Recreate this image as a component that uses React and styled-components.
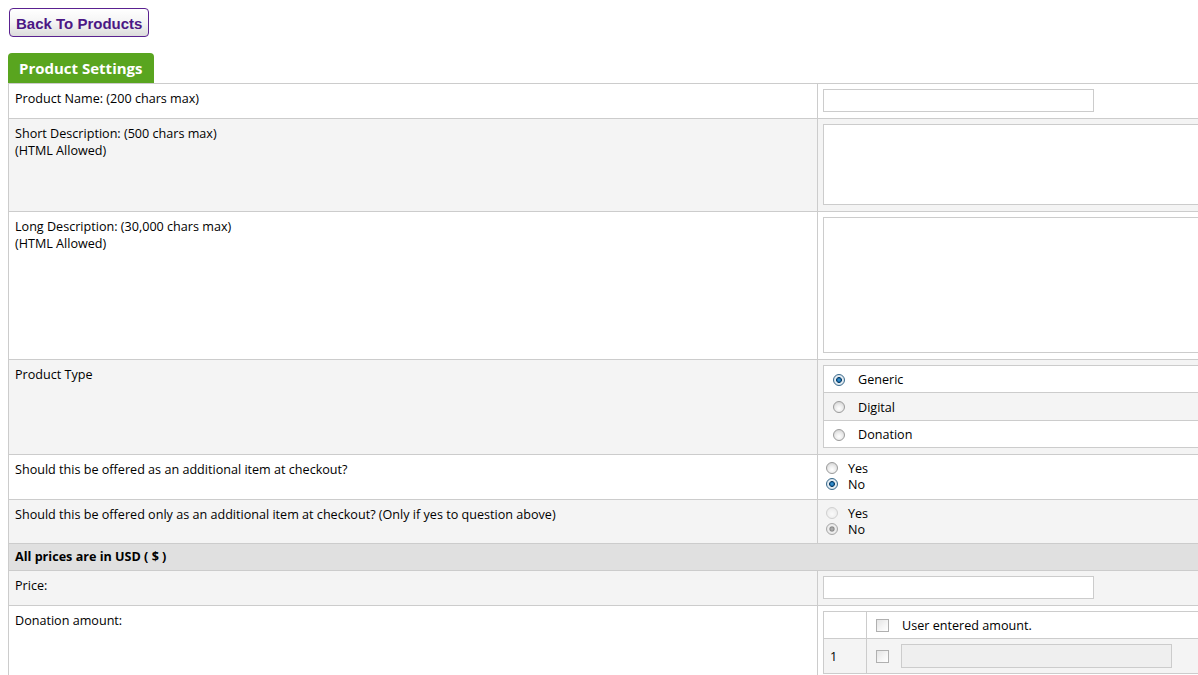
import React from "react";
import styled, { createGlobalStyle, css } from "styled-components";

const GlobalStyle = createGlobalStyle`
  html, body {
    margin: 0;
    padding: 0;
    background: #fff;
    overflow: hidden;
  }
  body {
    font-family: "Open Sans", "Liberation Sans", Arial, sans-serif;
    font-size: 12.6px;
    color: #000;
  }
`;

const productTypes = [
  { label: "Generic", checked: true },
  { label: "Digital", checked: false },
  { label: "Donation", checked: false },
];

const App = () => {
  return (
    <Page>
      <GlobalStyle />
      <BackButton type="button">Back To Products</BackButton>
      <Tab>Product Settings</Tab>
      <Settings>
        <tbody>
          <Row>
            <Label>Product Name: (200 chars max)</Label>
            <Field>
              <TextInput type="text" />
            </Field>
          </Row>
          <Row $alt>
            <Label>
              Short Description: (500 chars max)
              <br />
              (HTML Allowed)
            </Label>
            <Field>
              <TextArea $height={81} />
            </Field>
          </Row>
          <Row>
            <Label>
              Long Description: (30,000 chars max)
              <br />
              (HTML Allowed)
            </Label>
            <Field>
              <TextArea $height={136} />
            </Field>
          </Row>
          <Row $alt>
            <Label>Product Type</Label>
            <Field>
              <Inner>
                <tbody>
                  {productTypes.map((type, index) => (
                    <InnerRow key={type.label} $alt={index % 2 === 1}>
                      <TypeCell>
                        <Radio $checked={type.checked} />
                        <TypeText>{type.label}</TypeText>
                      </TypeCell>
                    </InnerRow>
                  ))}
                </tbody>
              </Inner>
            </Field>
          </Row>
          <Row>
            <Label>Should this be offered as an additional item at checkout?</Label>
            <Field $bottom={7}>
              <Choice>
                <Radio />
                <ChoiceText>Yes</ChoiceText>
              </Choice>
              <Choice>
                <Radio $checked />
                <ChoiceText>No</ChoiceText>
              </Choice>
            </Field>
          </Row>
          <Row $alt>
            <Label>
              Should this be offered only as an additional item at checkout? (Only if yes to
              question above)
            </Label>
            <Field>
              <Choice>
                <Radio $disabled />
                <ChoiceText>Yes</ChoiceText>
              </Choice>
              <Choice>
                <Radio $checked $disabled />
                <ChoiceText>No</ChoiceText>
              </Choice>
            </Field>
          </Row>
          <HeadRow>
            <HeadCell colSpan={2}>All prices are in USD ( $ )</HeadCell>
          </HeadRow>
          <Row $alt>
            <Label>Price:</Label>
            <Field>
              <TextInput type="text" />
            </Field>
          </Row>
          <Row>
            <Label>Donation amount:</Label>
            <Field>
              <Inner>
                <tbody>
                  <InnerRow>
                    <NumCell></NumCell>
                    <AmountCell>
                      <Checkbox />
                      <TypeText>User entered amount.</TypeText>
                    </AmountCell>
                  </InnerRow>
                  <InnerRow $alt>
                    <NumCell>1</NumCell>
                    <AmountCell $tall>
                      <Checkbox />
                      <AmountInput type="text" disabled />
                    </AmountCell>
                  </InnerRow>
                </tbody>
              </Inner>
            </Field>
          </Row>
        </tbody>
      </Settings>
    </Page>
  );
};

const Page = styled.div`
  padding: 8px;
  width: 1640px;
`;

const BackButton = styled.button`
  display: block;
  height: 29px;
  margin: 0 0 16px 1px;
  padding: 2px 6px 0;
  font-family: "Liberation Sans", Arial, sans-serif;
  font-size: 15px;
  font-weight: bold;
  color: #4b1785;
  border: 1px solid #5a2190;
  border-radius: 4px;
  background: linear-gradient(#ffffff 0%, #f4f4f4 50%, #dcdcdc 100%);
`;

const Tab = styled.div`
  display: inline-block;
  height: 30px;
  line-height: 31px;
  padding: 0 11px 0 11px;
  background: #59a51f;
  color: #fff;
  font-family: "Open Sans", "Liberation Sans", Arial, sans-serif;
  font-size: 15px;
  font-weight: bold;
  border-radius: 4px 4px 0 0;
  vertical-align: bottom;
`;

const Settings = styled.table`
  width: 1618px;
  border-collapse: collapse;
  border: 1px solid #cccccc;
`;

const Row = styled.tr`
  background: ${(p) => (p.$alt ? "#f4f4f4" : "#ffffff")};
  border-top: 1px solid #cccccc;
`;

const Label = styled.td`
  width: 796px;
  padding: 6px 6px;
  vertical-align: top;
  line-height: 17px;
  border-right: 1px solid #cccccc;
`;

const Field = styled.td`
  padding: 5px 5px ${(p) => p.$bottom ?? 6}px;
  vertical-align: top;
`;

const TextInput = styled.input`
  display: block;
  box-sizing: border-box;
  width: 271px;
  height: 23px;
  margin: 0;
  border: 1px solid #cccccc;
  background: #fff;
`;

const TextArea = styled.textarea`
  display: block;
  box-sizing: border-box;
  width: 790px;
  height: ${(p) => p.$height}px;
  margin: 0;
  border: 1px solid #cccccc;
  background: #fff;
  resize: none;
`;

const Inner = styled.table`
  width: 100%;
  border-collapse: collapse;
  border: 1px solid #cccccc;
`;

const InnerRow = styled.tr`
  background: ${(p) => (p.$alt ? "#f4f4f4" : "#ffffff")};
  border-top: 1px solid #cccccc;
`;

const TypeCell = styled.td`
  height: 26.4px;
  padding: 0 9px;
  vertical-align: middle;
  white-space: nowrap;
`;

const TypeText = styled.span`
  margin-left: 13px;
  vertical-align: middle;
`;

const Choice = styled.div`
  display: flex;
  align-items: center;
  height: 16px;
  padding-left: 3px;
`;

const ChoiceText = styled.span`
  margin-left: 10px;
`;

const Radio = styled.span`
  display: inline-block;
  box-sizing: border-box;
  width: 12px;
  height: 12px;
  border-radius: 50%;
  vertical-align: middle;
  border: 1px solid #9c9c9c;
  background: radial-gradient(circle at 50% 65%, #ffffff 0%, #ececec 45%, #c9c9c9 100%);
  ${(p) =>
    p.$checked &&
    css`
      border-color: #3a6a8c;
      background: radial-gradient(
        circle at 50% 50%,
        #4aa3dc 0%,
        #1b6fae 22%,
        #0d3f66 36%,
        #e6eef4 46%,
        #d0dbe3 100%
      );
    `}
  ${(p) =>
    p.$disabled &&
    css`
      border-color: #d0d0d0;
      background: radial-gradient(circle at 50% 60%, #fafafa 0%, #eeeeee 60%, #e2e2e2 100%);
    `}
  ${(p) =>
    p.$disabled &&
    p.$checked &&
    css`
      border-color: #a8a8a8;
      background: radial-gradient(
        circle at 50% 50%,
        #b8b8b8 0%,
        #8c8c8c 30%,
        #f0f0f0 45%,
        #dcdcdc 100%
      );
    `}
`;

const Checkbox = styled.span`
  display: inline-block;
  box-sizing: border-box;
  width: 13px;
  height: 13px;
  vertical-align: middle;
  border: 1px solid #b0b0b0;
  background: linear-gradient(135deg, #e4e4e4 0%, #f6f6f6 60%, #ffffff 100%);
`;

const NumCell = styled.td`
  width: 30px;
  padding: 0 6px;
  border-right: 1px solid #cccccc;
  vertical-align: middle;
`;

const AmountCell = styled.td`
  height: ${(p) => (p.$tall ? 34 : 26)}px;
  padding: 0 9px;
  vertical-align: middle;
  white-space: nowrap;
`;

const AmountInput = styled.input`
  box-sizing: border-box;
  width: 271px;
  height: 24px;
  margin: 0 0 0 12px;
  vertical-align: middle;
  border: 1px solid #cccccc;
  background: #efefef;
`;

const HeadRow = styled.tr`
  background: #e0e0e0;
  border-top: 1px solid #cccccc;
`;

const HeadCell = styled.td`
  padding: 5px 6px 5px;
  font-weight: bold;
  line-height: 16px;
`;

export default App;
